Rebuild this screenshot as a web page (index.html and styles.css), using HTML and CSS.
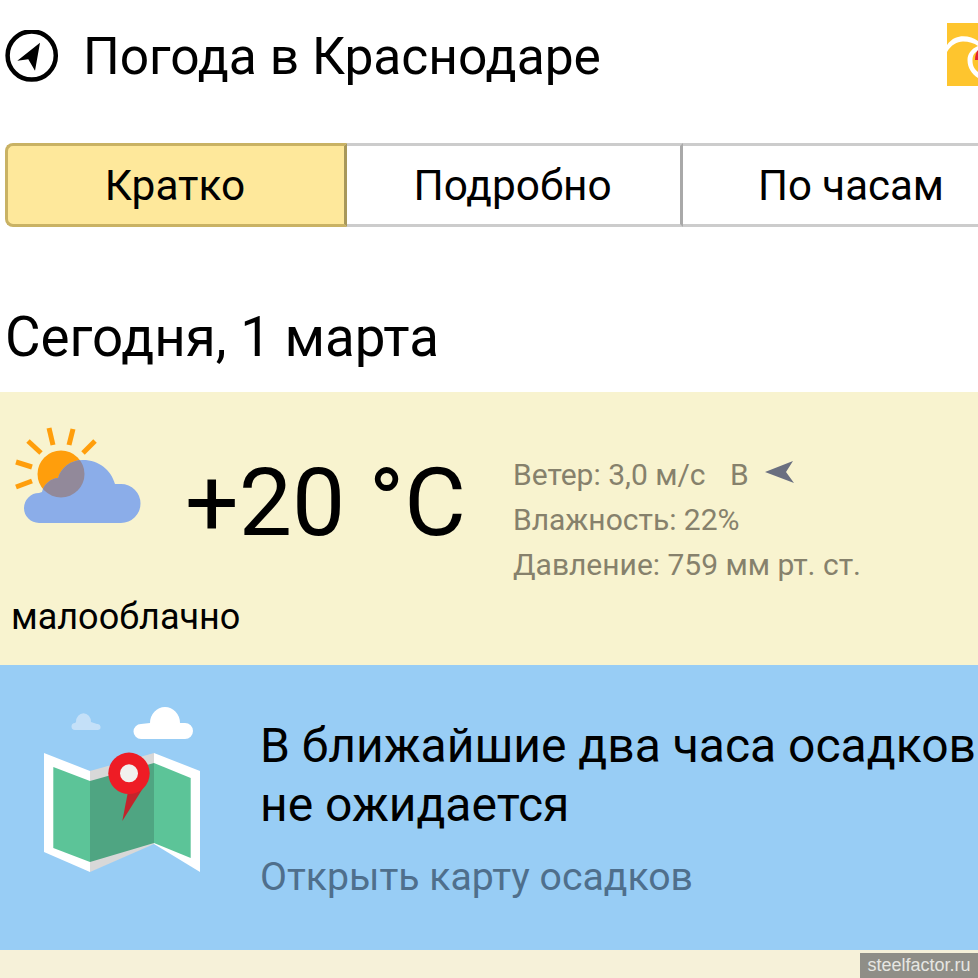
FILE: index.html
```html
<!DOCTYPE html>
<html lang="ru">
<head>
<meta charset="utf-8">
<title>Погода в Краснодаре</title>
<link rel="stylesheet" href="styles.css">
</head>
<body>
<div class="page">
  <header class="header">
    <svg class="nav-icon" width="54" height="54" viewBox="0 0 54 54">
      <circle cx="26.700" cy="25.500" r="24.100" fill="none" stroke="#000" stroke-width="4.500"/>
      <path d="M35 12.700 L12.300 30.700 L23.300 29.300 L30 40.700 Z" fill="#000"/>
    </svg>
    <h1 class="title">Погода в Краснодаре</h1>
    <svg class="logo" width="31" height="63" viewBox="0 0 31 63">
      <rect width="31" height="63" fill="#fec52e"/>
      <path d="M0 22 C5 15 11 13.300 16 13.300 C22 13.300 27 15 31 18 L31 23 C27 20 22 18.500 16 18.500 C10 18.500 4 22 0 29 Z" fill="#fff"/>
      <path d="M31 23 C24 26 20.500 31 20.500 37 C20.500 45 25 51 31 55 L31 49 C27 46 25.500 42 25.500 38 C25.500 32 27 30 31 28 Z" fill="#fff"/>
      <path d="M31 27 C29 29 28 33 28 37 L31 37 Z" fill="#e5202e"/>
    </svg>
  </header>

  <nav class="tabs">
    <div class="tab tab-active">Кратко</div>
    <div class="tab tab-middle">Подробно</div>
    <div class="tab tab-last">По часам</div>
  </nav>

  <h2 class="date">Сегодня, 1 марта</h2>

  <section class="now">
    <div class="now-row">
      <svg class="sun-icon" width="130" height="100" viewBox="0 0 130 100">
        <defs>
          <clipPath id="sun-clip"><circle cx="46" cy="47" r="23.500"/></clipPath>
        </defs>
        <g stroke="#ff9e0c" stroke-width="5" fill="none">
          <path d="M34 1 L38 18"/><path d="M58 2 L54 18"/><path d="M80 14 L68 26"/><path d="M13 14 L26 26"/><path d="M1 35 L17 40"/><path d="M1 60 L17 54"/>
        </g>
        <circle cx="46" cy="47" r="23.500" fill="#ff9e0c"/>
        <path d="M24 96 A15 15 0 0 1 24 66 L27 65 C28 58 36 51 43 51 C46 41 55 33 68 33 C84 33 96 43 100 57 Q103 57 106 57 A19.500 19.500 0 0 1 106 96 Z" fill="#8bade9"/>
        <path clip-path="url(#sun-clip)" d="M24 96 A15 15 0 0 1 24 66 L27 65 C28 58 36 51 43 51 C46 41 55 33 68 33 C84 33 96 43 100 57 Q103 57 106 57 A19.500 19.500 0 0 1 106 96 Z" fill="#92899a"/>
      </svg>
      <div class="temp">+20 °C</div>
      <div class="facts">
        <div class="fact">Ветер: 3,0 м/с <span class="wind-dir">В</span>
          <svg class="wind-icon" width="31" height="24" viewBox="0 0 31 24"><path d="M0 11 L28 0 L21 11 L29 22 Z" fill="#6a6f80"/></svg>
        </div>
        <div class="fact">Влажность: 22%</div>
        <div class="fact">Давление: 759 мм рт. ст.</div>
      </div>
    </div>
    <div class="cond">малооблачно</div>
  </section>

  <section class="rain">
    <svg class="map-icon" width="158" height="172" viewBox="0 0 158 172">
      <path d="M31 28 A3.500 3.500 0 0 1 31 21 L32 20 A7.500 8.700 0 0 1 47 20 L53 22 A3 3 0 0 1 54 28 Z" fill="#c4e0f8"/>
      <path d="M97 37 A7.500 7.500 0 0 1 97 22 L106 21 A15 16 0 0 1 136 21 L141 21 A8 8 0 0 1 141 37 Z" fill="#fff"/>
      <path d="M0 51 L46 69 L46 170 L0 150 Z" fill="#fff"/>
      <path d="M110 51 L156 69 L156 170 L110 142 Z" fill="#fff"/>
      <path d="M46 69 L110 51 L110 142 L46 170 Z" fill="#d8d8d8"/>
      <path d="M9.300 65 L46 79 L46 160 L9.300 146 Z" fill="#5cc498"/>
      <path d="M110 61 L146.700 76 L146.700 156 L110 141 Z" fill="#5cc498"/>
      <path d="M46 79 L110 61 L110 141 L46 160 Z" fill="#4fa582"/>
      <path d="M84.300 88 L78.300 119 L101 83 Z" fill="#c3242b"/>
      <circle cx="85" cy="71.300" r="20.700" fill="#ee1c25"/>
      <circle cx="85" cy="71.300" r="9" fill="#f1f1ef"/>
    </svg>
    <div class="rain-text">
      <div class="rain-msg">В ближайшие два часа осадков не ожидается</div>
      <div class="rain-link">Открыть карту осадков</div>
    </div>
  </section>

  <footer class="foot"><span class="mark">steelfactor.ru</span></footer>
</div>
</body>
</html>
```
FILE: styles.css
```css
* { box-sizing: border-box; margin: 0; padding: 0; }
html, body { width: 978px; height: 978px; overflow: hidden; background: #fff; }
body { font-family: Roboto, "Noto Sans", sans-serif; color: #000; }
.page { width: 978px; height: 978px; display: flex; flex-direction: column; overflow: hidden; }

.header { height: 143px; flex: none; display: flex; align-items: flex-start; padding: 30px 0 0 5px; position: relative; }
.nav-icon { flex: none; }
.title { font-weight: 400; font-size: 51.5px; line-height: 54px; margin-left: 24px; white-space: nowrap; }
.logo { position: absolute; left: 947px; top: 23px; }

.tabs { height: 84px; flex: none; display: flex; margin-left: 5px; width: 973px; font-size: 42.4px; }
.tab { display: flex; align-items: center; justify-content: center; border-top: 3px solid #ccc; border-bottom: 3px solid #ccc; }
.tab-active { width: 342px; background: #fee89b; border: 3px solid #c9b264; border-right-color: #a8985a; border-radius: 8px 0 0 8px; padding-right: 2px; }
.tab-middle { width: 336px; border-right: 3px solid #a9a9a9; padding-right: 2px; }
.tab-last { width: 295px; justify-content: flex-start; padding-left: 75px; white-space: nowrap; font-size: 42px; }

.date { font-weight: 400; font-size: 54.7px; line-height: 56px; height: 165px; flex: none; padding: 82px 0 0 5px; white-space: nowrap; }

.now { height: 273px; flex: none; background: #f8f3cf; padding: 35px 0 0 11px; }
.now-row { display: flex; align-items: flex-start; }
.sun-icon { flex: none; margin-left: 4px; }
.temp { font-size: 94.8px; line-height: 100px; margin-left: 40px; margin-top: 26px; width: 328px; white-space: nowrap; }
.facts { font-size: 30px; line-height: 45px; color: #86816c; margin-top: 25px; white-space: nowrap; }
.fact { height: 45px; display: flex; align-items: center; white-space: pre; }
.wind-dir { margin-left: 17px; }
.wind-icon { margin-left: 16px; margin-top: -4px; }
.cond { font-size: 36px; line-height: 40px; margin-top: 10px; }

.rain { height: 285px; flex: none; background: #98cdf5; display: flex; padding: 37px 0 0 44px; }
.map-icon { flex: none; }
.rain-text { margin-left: 58px; width: 730px; }
.rain-msg { font-size: 48px; line-height: 59px; margin-top: 14px; }
.rain-link { font-size: 39.2px; line-height: 44px; color: #4f6f8c; margin-top: 21px; }

.foot { flex: 1; background: #f6f1d9; display: flex; justify-content: flex-end; align-items: flex-end; }
.mark { width: 118px; height: 25px; background: #8f8e87; color: #e6e6e2; font: 18px/25px "Liberation Sans", Arial, sans-serif; text-align: center; white-space: nowrap; }
```
